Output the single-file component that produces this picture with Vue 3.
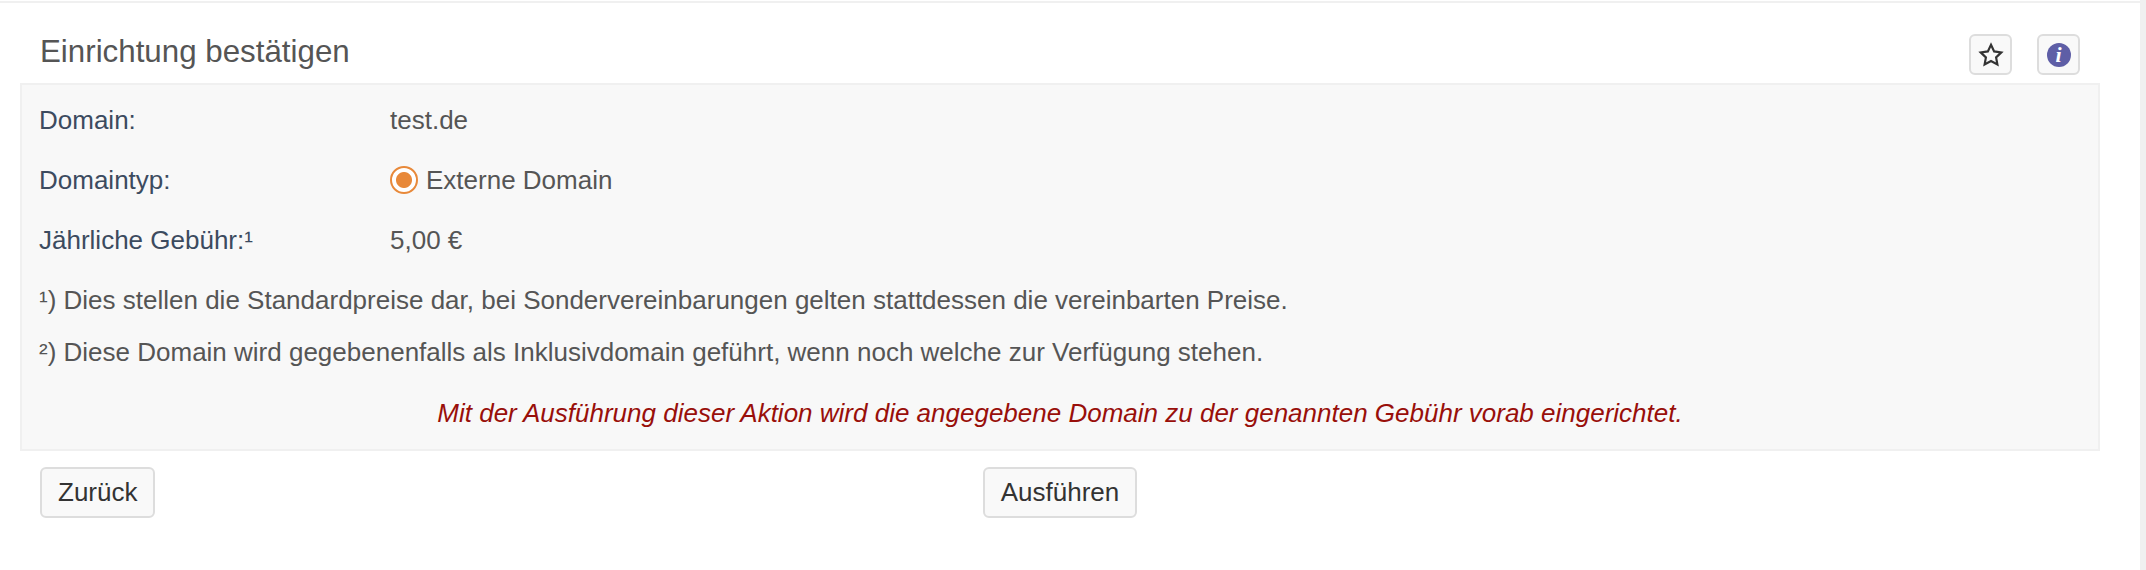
<template>
  <div class="page">
    <div class="content">
      <div class="head">
        <h2 class="title">Einrichtung bestätigen</h2>
        <div class="head-tools">
          <button class="tool-btn" type="button" aria-label="Favorit">
            <svg width="26" height="26" viewBox="0 0 24 24" fill="none" stroke="#333" stroke-width="2" stroke-linejoin="miter">
              <path d="M12 2.6l2.9 6.1 6.6.9-4.8 4.6 1.2 6.6L12 17.6l-5.9 3.2 1.2-6.6-4.8-4.6 6.6-.9z" />
            </svg>
          </button>
          <button class="tool-btn" type="button" aria-label="Info">
            <span class="info-icon">i</span>
          </button>
        </div>
      </div>

      <div class="panel">
        <div v-for="row in rows" :key="row.label" class="row">
          <div class="label">{{ row.label }}</div>
          <div class="value">
            <span v-if="row.radio" class="radio"></span>
            {{ row.value }}
          </div>
        </div>
        <p class="note first">¹) Dies stellen die Standardpreise dar, bei Sondervereinbarungen gelten stattdessen die vereinbarten Preise.</p>
        <p class="note">²) Diese Domain wird gegebenenfalls als Inklusivdomain geführt, wenn noch welche zur Verfügung stehen.</p>
        <p class="warning">Mit der Ausführung dieser Aktion wird die angegebene Domain zu der genannten Gebühr vorab eingerichtet.</p>
      </div>

      <div class="actions">
        <button class="btn" type="button">Zurück</button>
        <button class="btn" type="button">Ausführen</button>
        <span></span>
      </div>
    </div>
  </div>
</template>

<script setup>
const rows = [
  { label: 'Domain:', value: 'test.de' },
  { label: 'Domaintyp:', value: 'Externe Domain', radio: true },
  { label: 'Jährliche Gebühr:¹', value: '5,00 €' }
];
</script>

<style>
html, body {
  margin: 0;
  background: #fff;
}
</style>

<style scoped>
.page {
  height: 570px;
  box-sizing: border-box;
  padding-top: 1px;
  border-right: 6px solid #f0f0f0;
  font-family: "Liberation Sans", Arial, sans-serif;
  overflow: hidden;
}

.content {
  height: 569px;
  box-sizing: border-box;
  border-top: 2px solid #f0f0f0;
  padding-left: 20px;
}

.head {
  width: 2080px;
  height: 80px;
  display: flex;
  justify-content: space-between;
  box-sizing: border-box;
  padding: 31px 20px 0 20px;
}

.title {
  margin: 0;
  font-size: 31.3px;
  line-height: 36px;
  font-weight: 400;
  color: #555;
}

.head-tools {
  display: flex;
  gap: 25px;
}

.tool-btn {
  width: 43px;
  height: 41px;
  padding: 0;
  display: flex;
  align-items: center;
  justify-content: center;
  box-sizing: border-box;
  background: #f9f9f9;
  border: 2px solid #ddd;
  border-radius: 6px;
}

.info-icon {
  width: 24px;
  height: 24px;
  border-radius: 50%;
  background: #5e5ea6;
  color: #fff;
  font-family: "Liberation Serif", serif;
  font-style: italic;
  font-weight: 700;
  font-size: 22px;
  line-height: 24px;
  text-align: center;
}

.panel {
  width: 2080px;
  height: 368px;
  box-sizing: border-box;
  background: #f8f8f8;
  border: 2px solid #f0f0f0;
  padding: 5px 17px 0;
}

.row {
  display: grid;
  grid-template-columns: 351px 1fr;
  height: 60px;
  align-items: center;
  font-size: 26px;
}

.label {
  color: #3c4b5f;
}

.value {
  display: flex;
  align-items: center;
  gap: 8px;
  color: #555;
}

.radio {
  width: 28px;
  height: 28px;
  box-sizing: border-box;
  border: 2px solid #e8893a;
  border-radius: 50%;
  background: radial-gradient(circle, #e8893a 0, #e8893a 7.5px, #fff 8.5px);
}

.note {
  margin: 0;
  line-height: 52px;
  font-size: 26px;
  color: #555;
}

.note.first {
  padding-top: 4px;
}

.warning {
  margin: 9px 0 0;
  font-size: 26px;
  line-height: 52px;
  font-style: italic;
  text-align: center;
  color: #990f0a;
}

.actions {
  width: 2080px;
  box-sizing: border-box;
  display: grid;
  grid-template-columns: 1fr auto 1fr;
  padding: 16px 20px 0;
  align-items: start;
}

.actions .btn:first-child {
  justify-self: start;
}

.btn {
  height: 51px;
  padding: 0 16px;
  box-sizing: border-box;
  background: #f9f9f9;
  border: 2px solid #ddd;
  border-radius: 6px;
  font-family: inherit;
  font-size: 26px;
  color: #333;
}
</style>
